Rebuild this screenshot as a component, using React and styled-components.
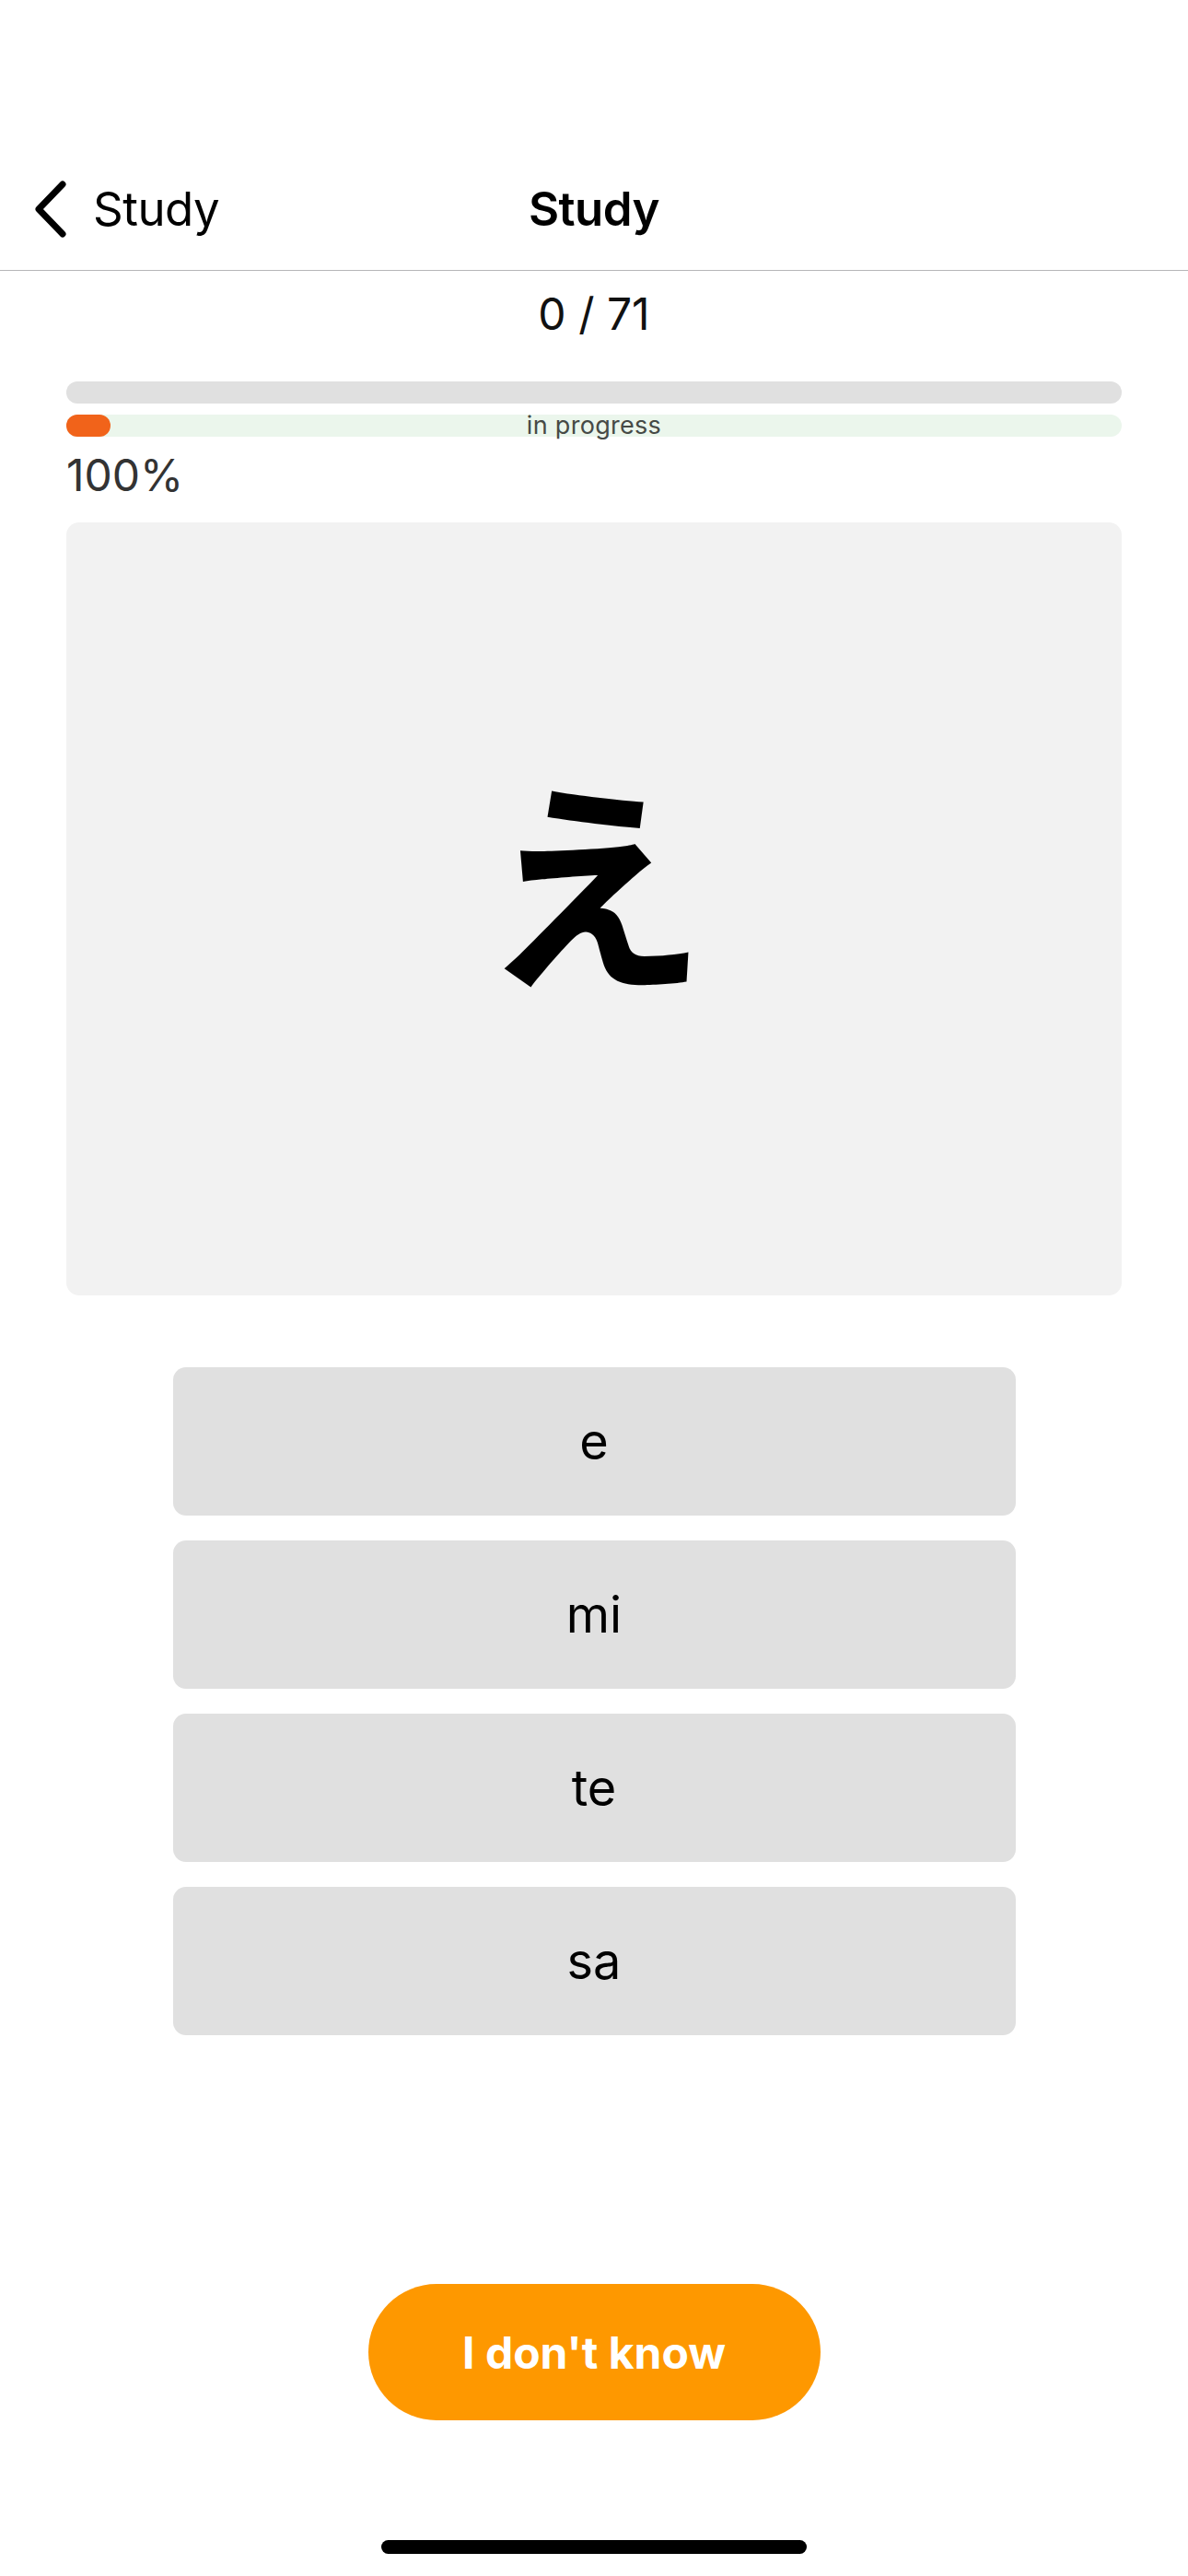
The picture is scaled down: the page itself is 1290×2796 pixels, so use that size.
import React from 'react';
import styled, { createGlobalStyle } from 'styled-components';

const GlobalStyle = createGlobalStyle`
  html, body {
    margin: 0;
    padding: 0;
    background: #fff;
  }
  body {
    font-family: Inter, "Noto Sans", "Liberation Sans", sans-serif;
    color: #000;
  }
`;

const Screen = styled.div`
  width: 1290px;
  height: 2796px;
  display: flex;
  flex-direction: column;
  background: #fff;
  overflow: hidden;
`;

const StatusSpace = styled.div`
  height: 160px;
  flex-shrink: 0;
`;

const NavBar = styled.header`
  height: 133px;
  flex-shrink: 0;
  display: grid;
  grid-template-columns: 1fr auto 1fr;
  align-items: center;
  border-bottom: 1px solid #b6b6b8;
`;

const BackButton = styled.button`
  justify-self: start;
  display: flex;
  align-items: center;
  gap: 26px;
  padding: 0 0 0 35px;
  border: 0;
  background: none;
  font-family: inherit;
  font-size: 51px;
  font-weight: 400;
  color: #000;
  letter-spacing: -0.5px;
  cursor: pointer;
`;

const Title = styled.h1`
  margin: 0;
  font-size: 51px;
  font-weight: 600;
  letter-spacing: -0.5px;
`;

const Content = styled.main`
  padding: 0 72px;
  display: flex;
  flex-direction: column;
`;

const Counter = styled.div`
  margin-top: 18px;
  text-align: center;
  font-size: 48px;
  line-height: 58px;
  color: #111;
`;

const Track = styled.div`
  position: relative;
  height: 24px;
  border-radius: 12px;
  background: ${p => p.$bg};
  margin-top: ${p => p.$top}px;
  display: flex;
  align-items: center;
  justify-content: center;
`;

const Fill = styled.div`
  position: absolute;
  left: 0;
  top: 0;
  bottom: 0;
  border-radius: 12px;
  background: #f1631a;
`;

const TrackLabel = styled.span`
  font-size: 27px;
  line-height: 24px;
  color: #464a46;
  letter-spacing: 0.3px;
`;

const Percent = styled.div`
  margin-top: 13px;
  font-size: 48px;
  line-height: 58px;
  color: #333;
`;

const Card = styled.div`
  margin-top: 22px;
  height: 839px;
  border-radius: 14px;
  background: #f2f2f2;
  display: flex;
  align-items: center;
  justify-content: center;
  padding-bottom: 72px;
  box-sizing: border-box;
`;

const Kana = styled.div`
  font-family: "Noto Sans CJK JP", sans-serif;
  font-weight: 700;
  font-size: 244px;
  line-height: 1;
`;

const Answers = styled.div`
  margin: 78px auto 0;
  width: 915px;
  display: flex;
  flex-direction: column;
  gap: 27px;
`;

const Answer = styled.button`
  height: 161px;
  border: 0;
  border-radius: 14px;
  background: #e0e0e0;
  font-family: inherit;
  font-size: 54px;
  color: #000;
  cursor: pointer;
`;

const Spacer = styled.div`
  flex: 1;
`;

const Footer = styled.footer`
  display: flex;
  flex-direction: column;
  align-items: center;
  padding-bottom: 24px;
`;

const DontKnow = styled.button`
  width: 491px;
  height: 148px;
  border: 0;
  border-radius: 74px;
  background: #fe9800;
  color: #fff;
  font-family: inherit;
  font-size: 48px;
  font-weight: 700;
  cursor: pointer;
`;

const HomeIndicator = styled.div`
  margin-top: 130px;
  width: 462px;
  height: 15px;
  border-radius: 8px;
  background: #000;
`;

const answers = ['e', 'mi', 'te', 'sa'];

export default function App() {
  const done = 0;
  const total = 71;
  return (
    <Screen>
      <GlobalStyle />
      <StatusSpace />
      <NavBar>
        <BackButton>
          <svg width="40" height="64" viewBox="0 0 40 64" fill="none">
            <polyline points="33,5 7,32 33,59" stroke="#000" strokeWidth="7" strokeLinecap="round" strokeLinejoin="round" />
          </svg>
          Study
        </BackButton>
        <Title>Study</Title>
        <div />
      </NavBar>
      <Content>
        <Counter>{done} / {total}</Counter>
        <Track $bg="#e0e0e0" $top={44} />
        <Track $bg="#ebf6ec" $top={12}>
          <Fill style={{ width: 48 }} />
          <TrackLabel>in progress</TrackLabel>
        </Track>
        <Percent>100%</Percent>
        <Card>
          <Kana>え</Kana>
        </Card>
        <Answers>
          {answers.map(a => (
            <Answer key={a}>{a}</Answer>
          ))}
        </Answers>
      </Content>
      <Spacer />
      <Footer>
        <DontKnow>I don't know</DontKnow>
        <HomeIndicator />
      </Footer>
    </Screen>
  );
}
